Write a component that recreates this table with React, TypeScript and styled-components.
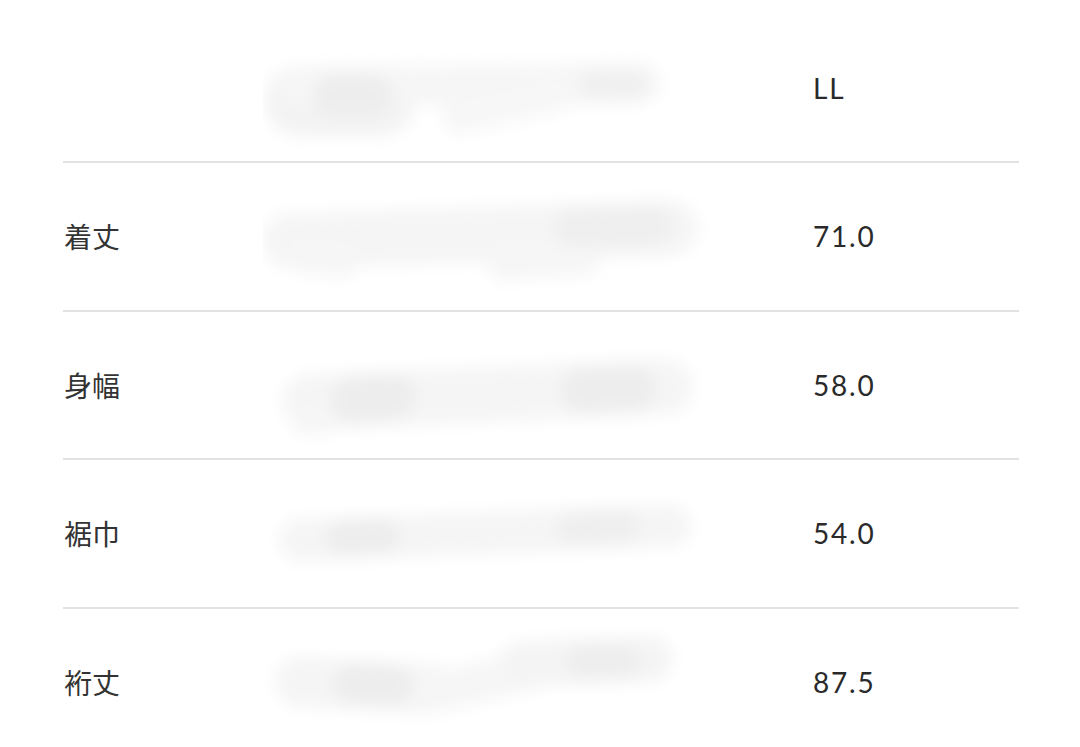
import React from "react";
import styled, { createGlobalStyle } from "styled-components";

const GlobalStyle = createGlobalStyle`
  html, body { margin: 0; padding: 0; background: #ffffff; }
  body { overflow: hidden; }
`;

const Page = styled.div`
  width: 1080px;
  height: 747px;
  padding: 14px 61px 0 63px;
  box-sizing: border-box;
  background: #ffffff;
  overflow: hidden;
`;

const Table = styled.div`
  display: flex;
  flex-direction: column;
`;

const Row = styled.div<{ $first?: boolean }>`
  display: grid;
  grid-template-columns: 200px 550px 1fr;
  align-items: center;
  height: ${(p) => (p.$first ? "147px" : "146.5px")};
  border-top: ${(p) => (p.$first ? "none" : "2px solid #e2e2e2")};
`;

const Label = styled.div`
  font-family: "Noto Sans CJK JP", "Noto Sans", sans-serif;
  font-size: 28px;
  font-weight: 400;
  color: #333333;
  padding-left: 1px;
`;

const Value = styled.div`
  font-family: Lato, "Open Sans", sans-serif;
  font-size: 28px;
  font-weight: 400;
  letter-spacing: 1.8px;
  color: #2a2a2a;
`;

const BlurBox = styled.svg`
  display: block;
  width: 550px;
  height: 146px;
`;

type Stroke = [number, number, number, number, number, string];

const blobs: Stroke[][] = [
  [
    [37, 86, 117, 86, 70, "#f3f3f3"],
    [37, 71, 377, 68, 40, "#f6f6f6"],
    [197, 101, 297, 78, 36, "#f7f7f7"],
    [70, 80, 110, 80, 40, "#ededed"],
    [330, 70, 370, 70, 30, "#f0f0f0"],
  ],
  [
    [27, 78, 407, 65, 55, "#f5f5f5"],
    [40, 95, 80, 100, 30, "#f6f6f6"],
    [240, 100, 320, 95, 35, "#f6f6f6"],
    [310, 65, 390, 62, 40, "#efefef"],
  ],
  [
    [47, 90, 402, 75, 55, "#f5f5f5"],
    [40, 110, 60, 110, 25, "#f6f6f6"],
    [90, 88, 130, 85, 45, "#ededed"],
    [320, 78, 370, 76, 45, "#ededed"],
  ],
  [
    [37, 80, 407, 66, 42, "#f5f5f5"],
    [80, 78, 120, 76, 34, "#ededed"],
    [310, 68, 360, 66, 34, "#efefef"],
  ],
  [
    [37, 73, 167, 80, 50, "#f5f5f5"],
    [167, 85, 270, 60, 40, "#f6f6f6"],
    [260, 55, 387, 50, 45, "#f4f4f4"],
    [90, 75, 130, 77, 40, "#ededed"],
    [320, 52, 360, 52, 35, "#eeeeee"],
  ],
];

const Smudge: React.FC<{ strokes: Stroke[]; id: string }> = ({ strokes, id }) => (
  <BlurBox viewBox="0 0 550 146">
    <defs>
      <filter id={id} filterUnits="userSpaceOnUse" x="0" y="0" width="550" height="146">
        <feGaussianBlur stdDeviation="8" />
      </filter>
    </defs>
    <g filter={`url(#${id})`}>
      {strokes.map(([x1, y1, x2, y2, w, c], i) => (
        <line
          key={i}
          x1={x1}
          y1={y1}
          x2={x2}
          y2={y2}
          stroke={c}
          strokeWidth={w}
          strokeLinecap="round"
        />
      ))}
    </g>
  </BlurBox>
);

const rows = [
  { label: "", value: "LL" },
  { label: "着丈", value: "71.0" },
  { label: "身幅", value: "58.0" },
  { label: "裾巾", value: "54.0" },
  { label: "裄丈", value: "87.5" },
];

export default function App() {
  return (
    <>
      <GlobalStyle />
      <Page>
        <Table>
          {rows.map((r, i) => (
            <Row key={i} $first={i === 0}>
              <Label>{r.label}</Label>
              <Smudge strokes={blobs[i]} id={`blur${i}`} />
              <Value>{r.value}</Value>
            </Row>
          ))}
        </Table>
      </Page>
    </>
  );
}
